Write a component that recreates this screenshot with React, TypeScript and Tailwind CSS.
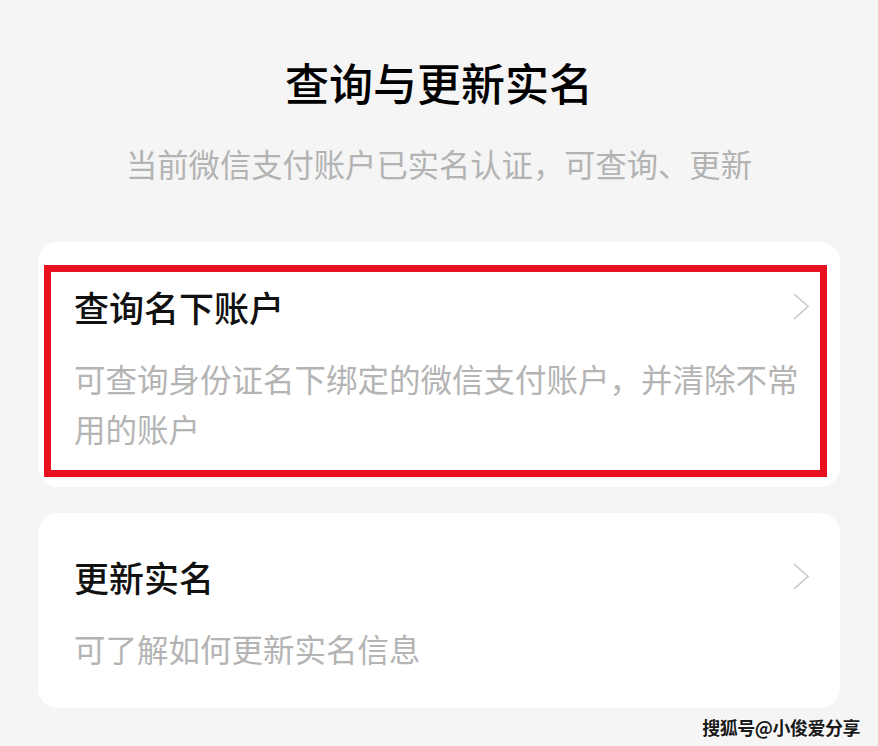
import React from "react";

const font = { fontFamily: '"Noto Sans CJK SC", "Noto Sans", sans-serif' };

function Chevron() {
  return (
    <svg width="16" height="27" viewBox="0 0 16 27" fill="none" className="shrink-0">
      <polyline points="1,1 15,13.5 1,26" stroke="#c9c9c9" strokeWidth="1.6" strokeLinejoin="miter" />
    </svg>
  );
}

interface CardProps {
  title: string;
  desc: string;
  pt: string;
  pb: string;
  highlight?: boolean;
}

function Card({ title, desc, pt, pb, highlight }: CardProps) {
  return (
    <div className={`relative bg-white rounded-[20px] pl-[36px] pr-[31px] ${pt} ${pb}`}>
      <div className="flex items-center justify-between">
        <div className="text-[35px] leading-[35px] font-medium text-[#111]">{title}</div>
        <Chevron />
      </div>
      <div className="mt-[29px] w-[730px] text-[31.5px] leading-[50px] text-[#b4b4b4]">{desc}</div>
      {highlight && (
        <div className="absolute left-[6px] top-[23px] right-[13px] bottom-[10px] border-[7px] border-[#e8111f]" />
      )}
    </div>
  );
}

export default function App() {
  return (
    <div className="relative w-[878px] h-[746px] overflow-hidden bg-[#f5f5f5]" style={font}>
      <div className="pt-[60px] text-center">
        <h1 className="text-[44px] leading-[44px] font-medium text-black">查询与更新实名</h1>
        <p className="mt-[44px] text-[31.3px] leading-[31px] text-[#b3b3b3]">
          当前微信支付账户已实名认证，可查询、更新
        </p>
      </div>

      <div className="mt-[63px] mx-[38px] flex flex-col gap-[26px]">
        <Card
          title="查询名下账户"
          desc="可查询身份证名下绑定的微信支付账户，并清除不常用的账户"
          pt="pt-[47px]"
          pb="pb-[34px]"
          highlight
        />
        <Card
          title="更新实名"
          desc="可了解如何更新实名信息"
          pt="pt-[46px]"
          pb="pb-[35px]"
        />
      </div>

      <div
        className="absolute right-[18px] bottom-[9px] text-[18px] leading-[20px] font-bold text-[#1a1a1a] tracking-[-0.5px]"
        style={{ textShadow: "0 0 2px #fff, 0 0 2px #fff, 1px 1px 0 #fff" }}
      >
        搜狐号@小俊爱分享
      </div>
    </div>
  );
}
